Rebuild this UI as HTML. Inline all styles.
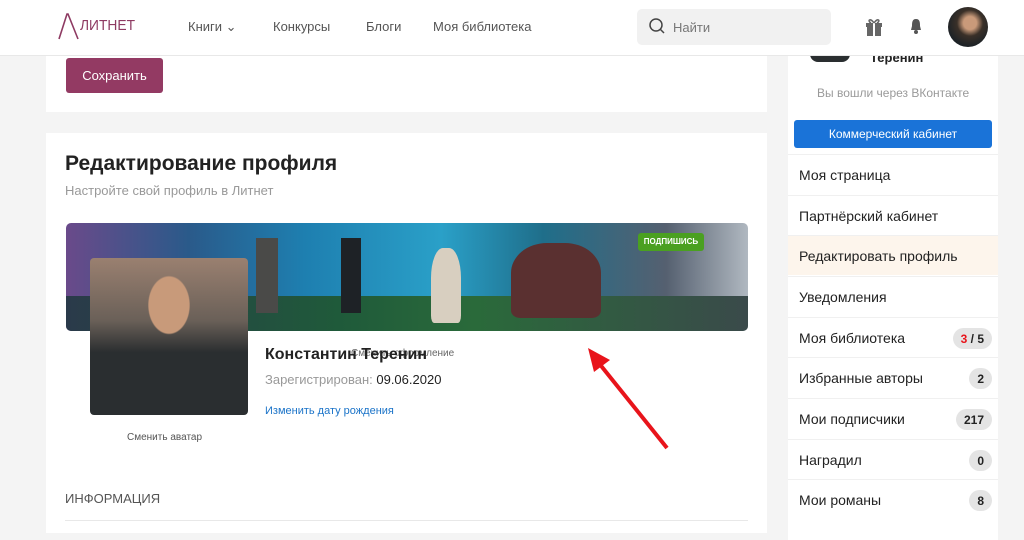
<!DOCTYPE html>
<html><head><meta charset="utf-8"><style>
*{box-sizing:border-box;margin:0;padding:0}
body{width:1024px;height:527px;overflow:hidden;background:#f4f4f4;font-family:"Liberation Sans","Noto Sans CJK SC",sans-serif;position:relative}
.hdr{position:absolute;left:0;top:0;width:1024px;height:56px;background:#fff;border-bottom:1px solid #e8e8e8;z-index:5}
.abs{position:absolute}
.nav{font-size:13px;color:#555;top:19px}
.card{position:absolute;background:#fff}
.side .row{position:absolute;left:0;width:210px;height:40px;border-top:1px solid #f0f0f0;font-size:14px;color:#222;padding:12px 0 0 11px}
.badge{position:absolute;right:6px;top:10px;height:21px;border-radius:11px;background:#e4e4e4;font-size:12px;font-weight:bold;padding:4px 8px;color:#222}
</style></head><body>
<div class="hdr">
  <svg class="abs" style="left:56px;top:13px" width="26" height="27"><path d="M3 26 L11 1 L12 1 L22 26" stroke="#8e3a62" stroke-width="1.6" fill="none"/></svg>
  <div class="abs" style="left:80px;top:17px;font-size:15px;color:#8e3a62;transform:scaleX(0.92);transform-origin:left">ЛИТНЕТ</div>
  <div class="abs nav" style="left:188px">Книги ⌄</div>
  <div class="abs nav" style="left:273px">Конкурсы</div>
  <div class="abs nav" style="left:366px">Блоги</div>
  <div class="abs nav" style="left:433px">Моя библиотека</div>
  <div class="abs" style="left:637px;top:9px;width:194px;height:36px;background:#f1f1f1;border-radius:5px"></div>
  <svg class="abs" style="left:648px;top:17px" width="20" height="20"><circle cx="8" cy="8" r="6" stroke="#444" stroke-width="1.5" fill="none"/><path d="M12 12 L16 16" stroke="#444" stroke-width="1.5"/></svg>
  <div class="abs" style="left:673px;top:20px;font-size:13px;color:#777">Найти</div>
  <svg class="abs" style="left:864px;top:17px" width="20" height="20"><rect x="2" y="6" width="16" height="4" fill="#666"/><rect x="3" y="10" width="14" height="9" fill="#666"/><rect x="9" y="6" width="2" height="13" fill="#fff"/><path d="M10 6 C6 0 3 4 7 6 M10 6 C14 0 17 4 13 6" stroke="#666" fill="none" stroke-width="1.5"/></svg>
  <svg class="abs" style="left:908px;top:17px" width="16" height="18"><path d="M8 2 C4 2 4 6 4 9 L3 13 L13 13 L12 9 C12 6 12 2 8 2Z" fill="#555"/><circle cx="8" cy="15" r="2" fill="#555"/></svg>
  <div class="abs" style="left:948px;top:7px;width:40px;height:40px;border-radius:50%;background:radial-gradient(circle at 55% 40%,#c99a7a 0 20%,#3a3028 40%,#1d2226 70%)"></div>
</div>
<div class="card" style="left:46px;top:40px;width:721px;height:72px"></div>
<div class="abs" style="left:66px;top:58px;width:97px;height:35px;background:#933a63;border-radius:3px;color:#fff;font-size:13px;padding-top:10px;text-align:center">Сохранить</div>
<div class="card" style="left:46px;top:133px;width:721px;height:400px"></div>
<div class="abs" style="left:65px;top:152px;font-size:21px;font-weight:bold;color:#222">Редактирование профиля</div>
<div class="abs" style="left:65px;top:183px;font-size:13px;color:#999">Настройте свой профиль в Литнет</div>
<div class="abs" style="left:66px;top:223px;width:682px;height:108px;border-radius:5px;background:linear-gradient(90deg,#6a4a8a 0%,#2a5a8a 18%,#1e7fb0 35%,#2aa0c8 55%,#1f6e8a 70%,#556070 88%,#b0b8c0 100%);overflow:hidden">
  <div class="abs" style="left:0;bottom:0;width:682px;height:35px;background:linear-gradient(90deg,#2a3a4a,#1f5a3a 40%,#2a6a3a 60%,#3a4a4a)"></div>
  <div class="abs" style="left:572px;top:10px;width:66px;height:18px;background:#4aa020;border-radius:3px;color:#fff;font-size:8px;font-weight:bold;text-align:center;padding-top:4px">ПОДПИШИСЬ</div>
  <div class="abs" style="left:445px;top:20px;width:90px;height:75px;background:#5a3030;border-radius:40% 40% 10% 10%"></div>
  <div class="abs" style="left:365px;top:25px;width:30px;height:75px;background:#d8cfc0;border-radius:40% 40% 10% 10%"></div>
  <div class="abs" style="left:275px;top:15px;width:20px;height:75px;background:#1e2226"></div>
  <div class="abs" style="left:190px;top:15px;width:22px;height:75px;background:#4a4a48"></div>
</div>
<div class="abs" style="left:90px;top:258px;width:158px;height:157px;border-radius:4px;background:radial-gradient(ellipse at 50% 30%,#c89a7a 0 18%,transparent 19%),linear-gradient(180deg,#9a8070 0%,#6a6058 40%,#2a2e30 60%,#2a2e30 100%)"></div>
<div class="abs" style="left:127px;top:432px;font-size:10px;color:#555">Сменить аватар</div>
<div class="abs" style="left:351px;top:348px;font-size:10px;color:#666">Сменить оформление</div>
<div class="abs" style="left:265px;top:346px;font-size:16px;font-weight:bold;color:#222">Константин Теренин</div>
<div class="abs" style="left:265px;top:372px;font-size:13px;color:#999">Зарегистрирован: <span style="color:#222">09.06.2020</span></div>
<div class="abs" style="left:265px;top:405px;font-size:11px;color:#1a73c8">Изменить дату рождения</div>
<div class="abs" style="left:65px;top:491px;font-size:13px;color:#555">ИНФОРМАЦИЯ</div>
<div class="abs" style="left:65px;top:520px;width:683px;height:1px;background:#e8e8e8"></div>
<svg class="abs" style="left:580px;top:340px" width="95" height="115"><path d="M87 108 L18 22" stroke="#e8141b" stroke-width="4"/><path d="M8 8 L30 20 L14 32Z" fill="#e8141b"/></svg>
<div class="card side" style="left:788px;top:40px;width:210px;height:500px">
  <div class="abs" style="left:22px;top:14px;width:40px;height:8px;background:#2a2e30;border-radius:0 0 20px 20px"></div>
  <div class="abs" style="left:82px;top:10px;font-size:13px;font-weight:bold;color:#222">Теренин</div>
  <div class="abs" style="left:29px;top:46px;font-size:12px;color:#999">Вы вошли через ВКонтакте</div>
  <div class="abs" style="left:6px;top:80px;width:198px;height:28px;background:#1a73d8;border-radius:3px;color:#fff;font-size:12px;text-align:center;padding-top:7px">Коммерческий кабинет</div>
  <div class="row" style="top:114px">Моя страница</div>
  <div class="row" style="top:155px">Партнёрский кабинет</div>
  <div class="row" style="top:195px;background:#fdf5ec">Редактировать профиль</div>
  <div class="row" style="top:236px">Уведомления</div>
  <div class="row" style="top:277px">Моя библиотека<span class="badge"><span style="color:#e8141b">3</span> / 5</span></div>
  <div class="row" style="top:317px">Избранные авторы<span class="badge">2</span></div>
  <div class="row" style="top:358px">Мои подписчики<span class="badge">217</span></div>
  <div class="row" style="top:399px">Наградил<span class="badge">0</span></div>
  <div class="row" style="top:439px">Мои романы<span class="badge">8</span></div>
</div>
</body></html>
